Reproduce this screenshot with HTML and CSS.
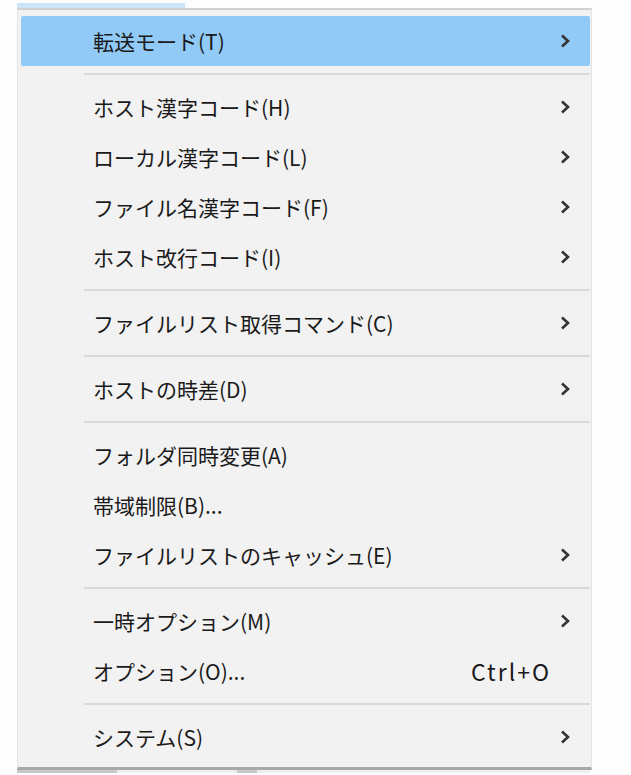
FILE: index.html
```html
<!DOCTYPE html>
<html lang="ja">
<head>
    <meta charset="UTF-8">
    <meta name="viewport" content="width=device-width, initial-scale=1.0">
    <title>設定メニュー</title>
    <link rel="stylesheet" href="styles.css">
</head>
<body>
    <div class="menubar-item"></div>
    <ul class="menu">
        <li class="menu-item active">
            <span class="label">転送モード(T)</span>
            <span class="arrow"><svg width="10" height="14" viewBox="0 0 10 14"><polyline points="2,1.5 8,7 2,12.5" /></svg></span>
        </li>
        <li class="separator"></li>
        <li class="menu-item">
            <span class="label">ホスト漢字コード(H)</span>
            <span class="arrow"><svg width="10" height="14" viewBox="0 0 10 14"><polyline points="2,1.5 8,7 2,12.5" /></svg></span>
        </li>
        <li class="menu-item">
            <span class="label">ローカル漢字コード(L)</span>
            <span class="arrow"><svg width="10" height="14" viewBox="0 0 10 14"><polyline points="2,1.5 8,7 2,12.5" /></svg></span>
        </li>
        <li class="menu-item">
            <span class="label">ファイル名漢字コード(F)</span>
            <span class="arrow"><svg width="10" height="14" viewBox="0 0 10 14"><polyline points="2,1.5 8,7 2,12.5" /></svg></span>
        </li>
        <li class="menu-item">
            <span class="label">ホスト改行コード(I)</span>
            <span class="arrow"><svg width="10" height="14" viewBox="0 0 10 14"><polyline points="2,1.5 8,7 2,12.5" /></svg></span>
        </li>
        <li class="separator"></li>
        <li class="menu-item">
            <span class="label">ファイルリスト取得コマンド(C)</span>
            <span class="arrow"><svg width="10" height="14" viewBox="0 0 10 14"><polyline points="2,1.5 8,7 2,12.5" /></svg></span>
        </li>
        <li class="separator"></li>
        <li class="menu-item">
            <span class="label">ホストの時差(D)</span>
            <span class="arrow"><svg width="10" height="14" viewBox="0 0 10 14"><polyline points="2,1.5 8,7 2,12.5" /></svg></span>
        </li>
        <li class="separator"></li>
        <li class="menu-item">
            <span class="label">フォルダ同時変更(A)</span>
            <span class="arrow"></span>
        </li>
        <li class="menu-item">
            <span class="label">帯域制限(B)...</span>
            <span class="arrow"></span>
        </li>
        <li class="menu-item">
            <span class="label">ファイルリストのキャッシュ(E)</span>
            <span class="arrow"><svg width="10" height="14" viewBox="0 0 10 14"><polyline points="2,1.5 8,7 2,12.5" /></svg></span>
        </li>
        <li class="separator"></li>
        <li class="menu-item">
            <span class="label">一時オプション(M)</span>
            <span class="arrow"><svg width="10" height="14" viewBox="0 0 10 14"><polyline points="2,1.5 8,7 2,12.5" /></svg></span>
        </li>
        <li class="menu-item">
            <span class="label">オプション(O)...</span>
            <span class="shortcut">Ctrl+O</span>
            <span class="arrow"></span>
        </li>
        <li class="separator"></li>
        <li class="menu-item">
            <span class="label">システム(S)</span>
            <span class="arrow"><svg width="10" height="14" viewBox="0 0 10 14"><polyline points="2,1.5 8,7 2,12.5" /></svg></span>
        </li>
    </ul>
    <div class="under"></div>
</body>
</html>
```

FILE: styles.css
```css
body {
    margin: 0;
    background-color: #fdfdfd;
    font-family: "Noto Sans CJK JP", "Noto Sans", sans-serif;
    color: #1a1a1a;
}

/* 上のメニューバーの選択部分 */
.menubar-item {
    margin: 3px 0 0 17px;
    width: 168px;
    height: 5px;
    background-color: #cce4f7;
}

.menu {
    list-style-type: none;
    margin: 0 0 0 17px;
    padding: 6px 1px 5px 3px;
    width: 569px;
    background-color: #f2f2f2;
    border-top: 2px solid #d0d0d0;
    border-left: 1px solid #e4e4e4;
    border-right: 1px solid #e4e4e4;
    border-bottom: 3px solid #a8a8a8;
}

.menu-item {
    display: flex;
    align-items: center;
    height: 50px;
    padding: 0 20px 0 72px;
    font-size: 21px;
    border-radius: 2px;
}

.menu-item.active {
    background-color: #91c9f7;
}

.label {
    flex: 1;
    white-space: nowrap;
}

.shortcut {
    margin-right: 9px;
    font-size: 23px;
    letter-spacing: 2px;
}

.arrow {
    width: 10px;
    height: 14px;
    display: flex;
}

.arrow polyline {
    fill: none;
    stroke: #333333;
    stroke-width: 2.6;
}

.separator {
    height: 16px;
    margin-left: 63px;
    display: flex;
    align-items: center;
}

.separator::after {
    content: "";
    flex: 1;
    height: 2px;
    background-color: #d9d9d9;
}

.under {
    margin-left: 17px;
    width: 573px;
    height: 3px;
    background: linear-gradient(to right, #c8c8c8 0, #c8c8c8 100px, #eeeeee 100px, #eeeeee 220px, #c8c8c8 220px, #c8c8c8 240px, #eeeeee 240px);
}
```
